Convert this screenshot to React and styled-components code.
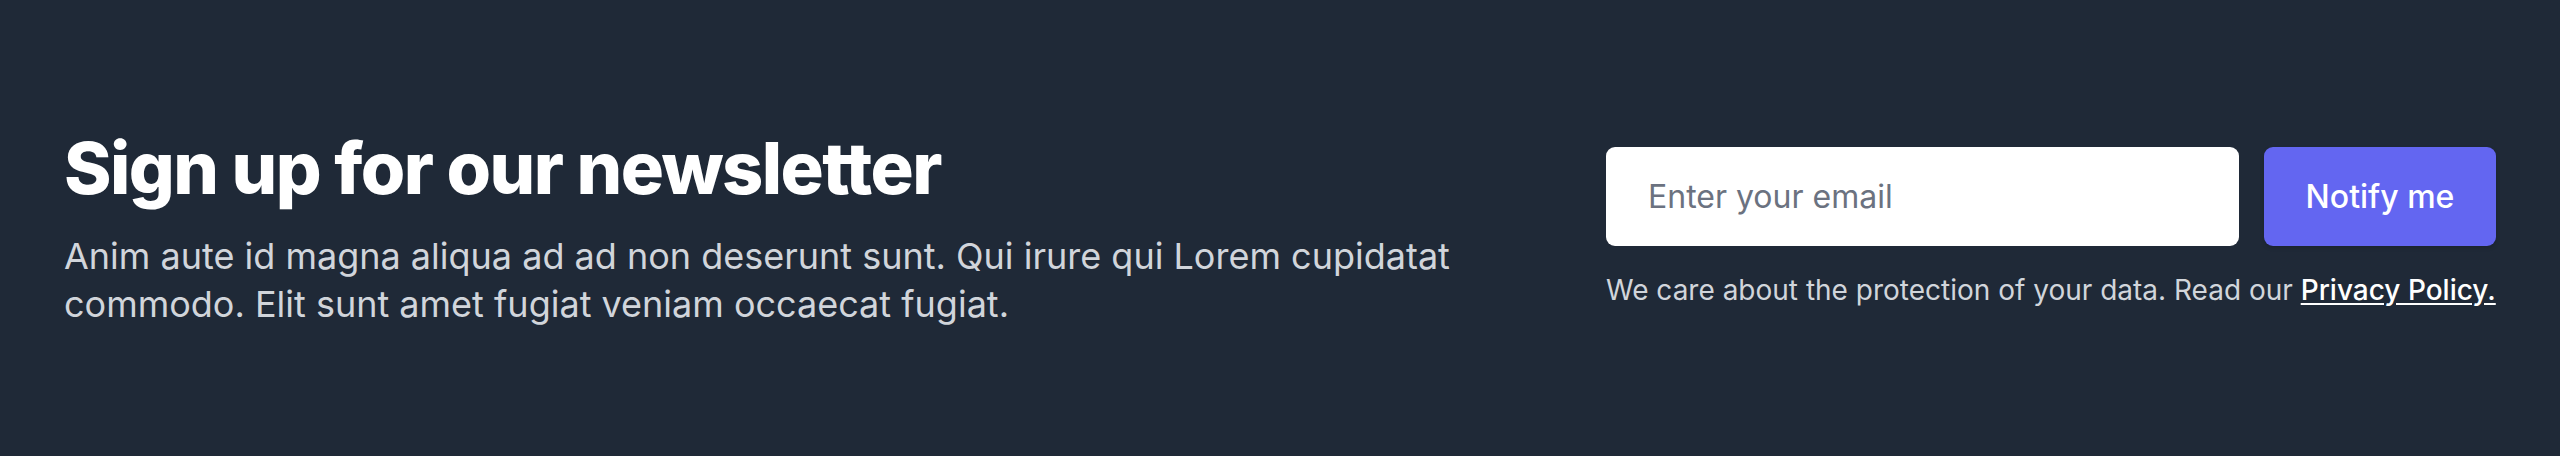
import React from "react";
import styled, { createGlobalStyle } from "styled-components";

const Global = createGlobalStyle`
  html, body { margin: 0; padding: 0; background: #1f2937; }
  body { font-family: Inter, "Noto Sans", "Liberation Sans", sans-serif; -webkit-font-smoothing: antialiased; }
  * { box-sizing: border-box; }
`;

const Section = styled.section`
  min-height: 456px;
  display: flex;
  align-items: center;
  justify-content: space-between;
  padding: 0 64px;
  background: #1f2937;
`;

const Intro = styled.div`
  max-width: 1480px;
`;

const Heading = styled.h2`
  margin: 0;
  color: #ffffff;
  font-size: 72px;
  font-weight: 800;
  letter-spacing: -0.022em;
  line-height: 1.1;
`;

const Lead = styled.p`
  margin: 24px 0 0;
  color: #d1d5db;
  font-size: 36px;
  line-height: 48px;
`;

const FormColumn = styled.div`
  width: 890px;
  flex-shrink: 0;
`;

const Form = styled.form`
  display: flex;
  gap: 25px;
`;

const EmailInput = styled.input`
  flex: 1;
  min-width: 0;
  height: 99px;
  border: none;
  border-radius: 9px;
  background: #ffffff;
  padding: 0 42px;
  font-family: inherit;
  font-size: 32px;
  color: #111827;
  outline: none;
  &::placeholder { color: #6b7280; }
`;

const Button = styled.button`
  width: 232px;
  height: 99px;
  border: none;
  border-radius: 9px;
  background: #6366f1;
  color: #ffffff;
  font-family: inherit;
  font-size: 32px;
  font-weight: 500;
  box-shadow: 0 2px 4px rgba(0, 0, 0, 0.15);
  cursor: pointer;
`;

const Note = styled.p`
  margin: 24px 0 0;
  color: #d1d5db;
  font-size: 28px;
  line-height: 40px;
`;

const Link = styled.a`
  color: #ffffff;
  font-weight: 500;
  text-decoration: underline;
  text-underline-offset: 3px;
`;

export default function App() {
  return (
    <>
      <Global />
      <Section>
        <Intro>
          <Heading>Sign up for our newsletter</Heading>
          <Lead>
            Anim aute id magna aliqua ad ad non deserunt sunt. Qui irure qui Lorem cupidatat
            commodo. Elit sunt amet fugiat veniam occaecat fugiat.
          </Lead>
        </Intro>
        <FormColumn>
          <Form onSubmit={(e) => e.preventDefault()}>
            <EmailInput type="email" placeholder="Enter your email" aria-label="Email address" />
            <Button type="submit">Notify me</Button>
          </Form>
          <Note>
            We care about the protection of your data. Read our <Link href="#">Privacy Policy.</Link>
          </Note>
        </FormColumn>
      </Section>
    </>
  );
}
